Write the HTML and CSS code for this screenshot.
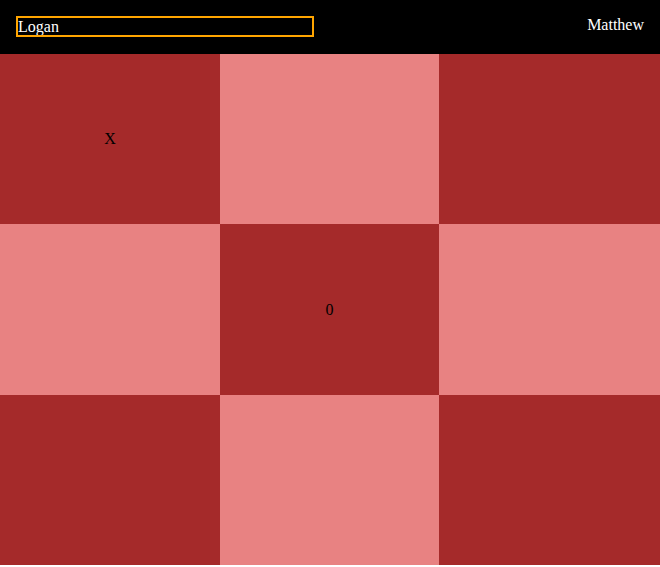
FILE: index.html
```html
<!DOCTYPE html>
<html>
<head>
<meta charset="utf-8">
<link rel="stylesheet" href="styles.css">
</head>
<body>
<header class="top">
  <input class="name-input" type="text" value="Logan">
  <span class="player">Matthew</span>
</header>
<main class="board">
  <div class="cell dark">X</div>
  <div class="cell light"></div>
  <div class="cell dark"></div>
  <div class="cell light"></div>
  <div class="cell dark">0</div>
  <div class="cell light"></div>
  <div class="cell dark"></div>
  <div class="cell light"></div>
  <div class="cell dark"></div>
</main>
</body>
</html>
```
FILE: styles.css
```css
html, body {
  margin: 0;
  padding: 0;
  background: #ffffff;
  font-family: "Liberation Serif", "Times New Roman", serif;
  font-size: 16px;
}
.top {
  box-sizing: border-box;
  height: 54px;
  background: #000000;
  display: flex;
  justify-content: space-between;
  align-items: flex-start;
  padding: 16px 16px 0 16px;
}
.name-input {
  box-sizing: border-box;
  width: 298px;
  height: 21px;
  margin: 0;
  padding: 0;
  border: 2px solid #ffa500;
  background: #000000;
  color: #ffffff;
  font-family: "Liberation Serif", "Times New Roman", serif;
  font-size: 16px;
  outline: none;
}
.player {
  color: #ffffff;
  line-height: normal;
}
.board {
  display: grid;
  grid-template-columns: 220px 219px 221px;
  grid-template-rows: 170px 171px 170px;
}
.cell {
  display: flex;
  align-items: center;
  justify-content: center;
  color: #000000;
}
.dark { background: #a52a2a; }
.light { background: #e88282; }
```
